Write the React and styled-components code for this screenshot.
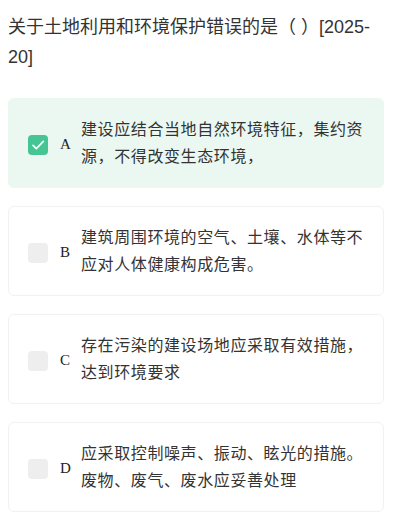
import React from 'react'
import styled, { createGlobalStyle } from 'styled-components'

const GlobalStyle = createGlobalStyle`
  html, body {
    margin: 0;
    padding: 0;
    background: #ffffff;
  }
  body {
    font-family: "Liberation Sans", "Noto Sans CJK SC", sans-serif;
    color: #333333;
  }
`

const Page = styled.div`
  width: 400px;
  box-sizing: border-box;
  padding: 12px 16px 0 8px;
`

const Title = styled.div`
  font-size: 18px;
  line-height: 30px;
  color: #333333;
  margin-bottom: 26px;
`

const Options = styled.div`
  display: flex;
  flex-direction: column;
  gap: 18px;
`

const Card = styled.div`
  display: flex;
  align-items: center;
  box-sizing: border-box;
  min-height: 89px;
  padding: 17px 14px 17px 19px;
  border-radius: 6px;
  border: 1px solid ${props => (props.checked ? '#ebf8f2' : '#f1f1f1')};
  background: ${props => (props.checked ? '#ebf8f2' : '#ffffff')};
`

const Box = styled.div`
  flex: 0 0 20px;
  width: 20px;
  height: 20px;
  border-radius: 4px;
  margin-top: 3px;
  display: flex;
  align-items: center;
  justify-content: center;
  background: ${props => (props.checked ? '#45c594' : '#eeeeee')};
`

const Letter = styled.span`
  flex: 0 0 auto;
  width: 21px;
  margin-left: 12px;
  margin-top: 3px;
  font-family: "Liberation Serif", serif;
  font-size: 15px;
  color: #222222;
`

const Text = styled.div`
  flex: 1;
  font-size: 16px;
  line-height: 27px;
  letter-spacing: 0.6px;
  color: #333333;
`

const Check = () => (
  <svg width="16" height="16" viewBox="0 0 24 24" fill="none">
    <path
      d="M4.5 12.5l5 5L20 6.5"
      stroke="#ffffff"
      strokeWidth="2.6"
      strokeLinecap="round"
      strokeLinejoin="round"
    />
  </svg>
)

const options = [
  { key: 'A', text: '建设应结合当地自然环境特征，集约资源，不得改变生态环境，', checked: true },
  { key: 'B', text: '建筑周围环境的空气、土壤、水体等不应对人体健康构成危害。' },
  { key: 'C', text: '存在污染的建设场地应采取有效措施，达到环境要求' },
  { key: 'D', text: '应采取控制噪声、振动、眩光的措施。废物、废气、废水应妥善处理' },
]

export default function App() {
  return (
    <Page>
      <GlobalStyle />
      <Title>关于土地利用和环境保护错误的是（ ）[2025-20]</Title>
      <Options>
        {options.map(o => (
          <Card key={o.key} checked={o.checked}>
            <Box checked={o.checked}>{o.checked && <Check />}</Box>
            <Letter>{o.key}</Letter>
            <Text>{o.text}</Text>
          </Card>
        ))}
      </Options>
    </Page>
  )
}
